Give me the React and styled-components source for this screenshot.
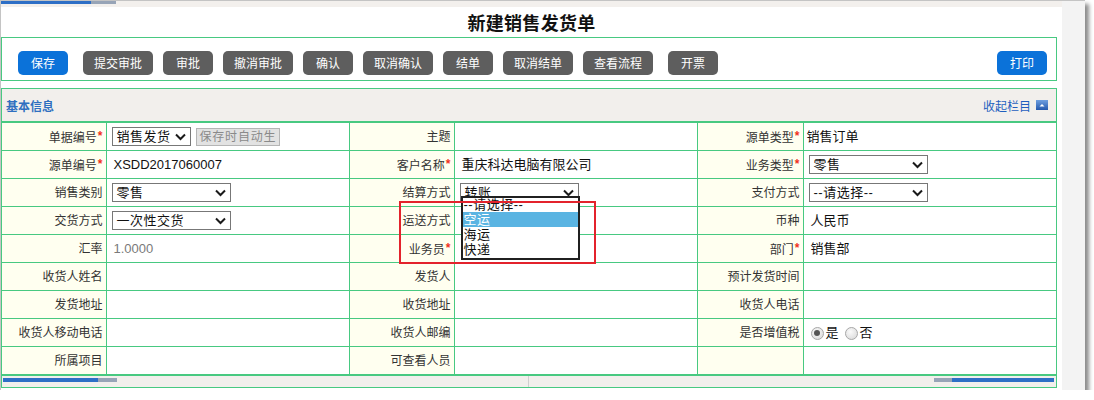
import React from "react";
import styled, { createGlobalStyle } from "styled-components";

const GREEN = "#48c981";

const GlobalStyle = createGlobalStyle`
  html, body { margin: 0; padding: 0; background: #fff; }
  body {
    font-family: "Liberation Sans", "Noto Sans CJK SC", sans-serif;
    font-size: 12px;
    color: #333;
  }
`;

const Window = styled.div`
  width: 1084px;
  height: 389px;
  display: flex;
  border-top: 1px solid #c4c4c4;
  border-left: 1px solid #c4c4c4;
  background: #fff;
  box-shadow: 4px 4px 4px rgba(0, 0, 0, 0.45);
`;

const Content = styled.div`
  width: 1061px;
  display: flex;
  flex-direction: column;
`;

const VScroll = styled.div`
  flex: 1;
  background: #f3f3f3;
`;

const Strip = styled.div`
  height: ${(p) => p.$h}px;
  background: #f3f0ed;
  display: flex;
  align-items: flex-start;
  padding-top: ${(p) => p.$pt || 0}px;
  box-sizing: border-box;
`;

const Thumb = styled.div`
  display: flex;
  height: ${(p) => p.$h || 4}px;
  margin-left: ${(p) => p.$ml || 0}px;
`;

const ThumbPart = styled.div`
  width: ${(p) => p.$w}px;
  background: ${(p) => (p.$blue ? "#2e6fc6" : "#97a4b7")};
`;

const TitleBar = styled.div`
  height: 30px;
  display: flex;
  align-items: center;
  justify-content: center;
  font-family: "Noto Sans CJK SC", sans-serif;
  font-size: 18px;
  font-weight: 700;
  color: #111;
  letter-spacing: 0.3px;
`;

const Toolbar = styled.div`
  height: 44px;
  margin-right: 5px;
  border: 1px solid ${GREEN};
  box-sizing: border-box;
  display: flex;
  align-items: flex-start;
  gap: 10px;
  padding: 13px 9px 0 16px;
`;

const Button = styled.button`
  height: 24px;
  min-width: 50px;
  padding: 0 11px;
  margin-left: ${(p) => p.$extra || 0}px;
  border: none;
  border-radius: 5px;
  background: ${(p) => (p.$primary ? "#0b72d9" : "#5e5e5e")};
  color: #fff;
  font-family: "Noto Sans CJK SC", sans-serif;
  font-size: 12px;
  line-height: 24px;
  cursor: pointer;
  box-sizing: border-box;
  &:last-child {
    margin-left: auto;
  }
`;

const Section = styled.div`
  margin-top: 7px;
  margin-right: 5px;
  border-left: 1px solid ${GREEN};
  border-right: 1px solid ${GREEN};
  border-top: 1px solid ${GREEN};
`;

const SectionHead = styled.div`
  height: 32px;
  background: #f2efec;
  display: flex;
  align-items: center;
  justify-content: space-between;
  padding: 0 8px 0 4px;
  font-family: "Noto Sans CJK SC", sans-serif;
  font-size: 12px;
`;

const HeadTitle = styled.span`
  color: #2f6fc0;
  font-weight: 700;
`;

const Collapse = styled.span`
  display: flex;
  align-items: center;
  gap: 5px;
  color: #1f5fbf;
`;

const TableWrap = styled.div`
  position: relative;
`;

const Table = styled.table`
  width: 100%;
  border-collapse: collapse;
  table-layout: fixed;
  border-top: 2px solid ${GREEN};
  border-bottom: 2px solid ${GREEN};
  font-family: "Liberation Sans", "Noto Sans CJK SC", sans-serif;
`;

const Cell = styled.td`
  height: 27px;
  padding: 0;
  border: 1px solid ${GREEN};
  border-left: ${(p) => (p.$first ? "none" : `1px solid ${GREEN}`)};
  border-right: ${(p) => (p.$last ? "none" : `1px solid ${GREEN}`)};
  vertical-align: middle;
  line-height: 16px;
  white-space: nowrap;
  overflow: visible;
`;

const LabelCell = styled(Cell)`
  background: #fffff0;
  text-align: right;
  padding-right: 3px;
  color: #333;
  font-size: 12px;
`;

const ValueCell = styled(Cell)`
  background: #fff;
  padding-left: 5px;
  font-size: 13px;
  color: #111;
`;

const Req = styled.span`
  color: #f0321c;
  font-size: 12px;
  font-weight: 700;
  vertical-align: 2px;
  margin-left: 1px;
`;

const Text = styled.span`
  margin-left: ${(p) => (p.$ml === undefined ? 2 : p.$ml)}px;
  color: ${(p) => (p.$muted ? "#7a7a7a" : "#111")};
`;

const SelectBox = styled.div`
  position: relative;
  display: inline-flex;
  align-items: center;
  justify-content: space-between;
  width: ${(p) => p.$w || 119}px;
  height: 19px;
  box-sizing: border-box;
  border: 1px solid #777;
  padding: 0 4px 0 4px;
  background: #fff;
  font-size: 13px;
  letter-spacing: 0.5px;
  color: #111;
  vertical-align: middle;
`;

const AutoInput = styled.span`
  display: inline-flex;
  align-items: center;
  height: 18px;
  width: 84px;
  margin-left: 5px;
  box-sizing: border-box;
  padding-left: 3px;
  border: 1px solid #b5b5b5;
  background: #e2e2e2;
  color: #8a8a8a;
  font-size: 12px;
  letter-spacing: 0.8px;
  vertical-align: middle;
  overflow: hidden;
`;

const DropList = styled.ul`
  position: absolute;
  top: 12px;
  left: 0;
  width: 119px;
  height: 64px;
  margin: 0;
  padding: 0;
  list-style: none;
  box-sizing: border-box;
  border: 2px solid #202020;
  background: #fff;
  overflow: hidden;
  z-index: 2;
`;

const DropItem = styled.li`
  height: 15px;
  line-height: 15px;
  padding-left: 1px;
  font-size: 13px;
  letter-spacing: 0.5px;
  background: ${(p) => (p.$active ? "#5ab4e2" : "transparent")};
  color: ${(p) => (p.$active ? "#fff" : "#111")};
  &:first-child {
    margin-top: -1px;
  }
`;

const Annotation = styled.div`
  position: absolute;
  left: 397px;
  top: 80px;
  width: 197px;
  height: 63px;
  box-sizing: border-box;
  border: 2px solid #e3232c;
  pointer-events: none;
  z-index: 3;
`;

const Radios = styled.span`
  display: inline-flex;
  align-items: center;
  gap: 2px;
  margin-left: 2px;
`;

const Radio = styled.span`
  width: 13px;
  height: 13px;
  border-radius: 50%;
  box-sizing: border-box;
  border: 1px solid #a8a8a8;
  background: radial-gradient(circle at 40% 35%, #fafafa, #d6d6d6);
  display: inline-flex;
  align-items: center;
  justify-content: center;
  margin-left: ${(p) => p.$ml || 0}px;
  &::after {
    content: "";
    width: 6px;
    height: 6px;
    border-radius: 50%;
    background: ${(p) => (p.$checked ? "#555" : "transparent")};
  }
`;

const FootPane = styled.div`
  display: flex;
  align-items: flex-start;
  justify-content: ${(p) => (p.$right ? "flex-end" : "flex-start")};
  padding-top: 2px;
  border-left: ${(p) => (p.$right ? "1px solid #cfcfcf" : "none")};
  padding-right: ${(p) => (p.$right ? 2 : 0)}px;
`;

const Footer = styled.div`
  height: 11px;
  background: #f2efec;
  border-bottom: 1px solid ${GREEN};
  display: grid;
  grid-template-columns: 526px 1fr;
`;

const Chevron = () => (
  <svg width="11" height="8" viewBox="0 0 11 8">
    <path d="M1 1.5 L5.5 6 L10 1.5" fill="none" stroke="#1a1a1a" strokeWidth="2" />
  </svg>
);

const CollapseIcon = () => (
  <svg width="12" height="10" viewBox="0 0 12 10">
    <defs>
      <linearGradient id="cg" x1="0" y1="0" x2="0" y2="1">
        <stop offset="0" stopColor="#6f9fe0" />
        <stop offset="1" stopColor="#2458ad" />
      </linearGradient>
    </defs>
    <rect x="0" y="0" width="12" height="10" fill="url(#cg)" />
    <path d="M3.5 6.5 L6 4 L8.5 6.5 Z" fill="#fff" />
  </svg>
);

const Select = ({ children, w, open }) => (
  <SelectBox $w={w}>
    <span>{children}</span>
    <Chevron />
    {open && (
      <DropList>
        <DropItem>--请选择--</DropItem>
        <DropItem $active>空运</DropItem>
        <DropItem>海运</DropItem>
        <DropItem>快递</DropItem>
      </DropList>
    )}
  </SelectBox>
);

const buttons = [
  { label: "保存", primary: true },
  { label: "提交审批", extra: 5 },
  { label: "审批" },
  { label: "撤消审批" },
  { label: "确认" },
  { label: "取消确认" },
  { label: "结单" },
  { label: "取消结单" },
  { label: "查看流程" },
  { label: "开票", extra: 5 },
  { label: "打印", primary: true },
];

const rows = [
  [
    { label: "单据编号", req: true, value: <><Select w={79}>销售发货</Select><AutoInput>保存时自动生</AutoInput></> },
    { label: "主题" },
    { label: "源单类型", req: true, value: <Text $ml={-2}>销售订单</Text> },
  ],
  [
    { label: "源单编号", req: true, value: <Text>XSDD2017060007</Text> },
    { label: "客户名称", req: true, value: <Text>重庆科达电脑有限公司</Text> },
    { label: "业务类型", req: true, value: <Select>零售</Select> },
  ],
  [
    { label: "销售类别", value: <Select>零售</Select> },
    { label: "结算方式", value: <Select open>转账</Select> },
    { label: "支付方式", value: <Select>--请选择--</Select> },
  ],
  [
    { label: "交货方式", value: <Select>一次性交货</Select> },
    { label: "运送方式" },
    { label: "币种", value: <Text>人民币</Text> },
  ],
  [
    { label: "汇率", value: <Text $muted>1.0000</Text> },
    { label: "业务员", req: true },
    { label: "部门", req: true, value: <Text>销售部</Text> },
  ],
  [{ label: "收货人姓名" }, { label: "发货人" }, { label: "预计发货时间" }],
  [{ label: "发货地址" }, { label: "收货地址" }, { label: "收货人电话" }],
  [
    { label: "收货人移动电话" },
    { label: "收货人邮编" },
    {
      label: "是否增值税",
      value: (
        <Radios>
          <Radio $checked />是<Radio $ml={4} />否
        </Radios>
      ),
    },
  ],
  [{ label: "所属项目" }, { label: "可查看人员" }, { label: "" }],
];

export default function App() {
  return (
    <>
      <GlobalStyle />
      <Window>
        <Content>
          <Strip $h={6}>
            <Thumb $h={3}>
              <ThumbPart $blue $w={90} />
              <ThumbPart $w={25} />
            </Thumb>
          </Strip>
          <TitleBar>新建销售发货单</TitleBar>
          <Toolbar>
            {buttons.map((b) => (
              <Button key={b.label} $primary={b.primary} $extra={b.extra}>
                {b.label}
              </Button>
            ))}
          </Toolbar>
          <Section>
            <SectionHead>
              <HeadTitle>基本信息</HeadTitle>
              <Collapse>
                收起栏目
                <CollapseIcon />
              </Collapse>
            </SectionHead>
            <TableWrap>
              <Table>
                <colgroup>
                  <col style={{ width: 104 }} />
                  <col style={{ width: 243 }} />
                  <col style={{ width: 105 }} />
                  <col style={{ width: 243 }} />
                  <col style={{ width: 106 }} />
                  <col />
                </colgroup>
                <tbody>
                  {rows.map((row, i) => (
                    <tr key={i}>
                      {row.map((c, j) => (
                        <React.Fragment key={j}>
                          <LabelCell $first={j === 0}>
                            {c.label}
                            {c.req && <Req>*</Req>}
                          </LabelCell>
                          <ValueCell $last={j === 2}>{c.value}</ValueCell>
                        </React.Fragment>
                      ))}
                    </tr>
                  ))}
                </tbody>
              </Table>
              <Annotation />
            </TableWrap>
            <Footer>
              <FootPane>
                <Thumb $ml={1}>
                  <ThumbPart $blue $w={95} />
                  <ThumbPart $w={19} />
                </Thumb>
              </FootPane>
              <FootPane $right>
                <Thumb>
                  <ThumbPart $w={18} />
                  <ThumbPart $blue $w={102} />
                </Thumb>
              </FootPane>
            </Footer>
          </Section>
        </Content>
        <VScroll />
      </Window>
    </>
  );
}
